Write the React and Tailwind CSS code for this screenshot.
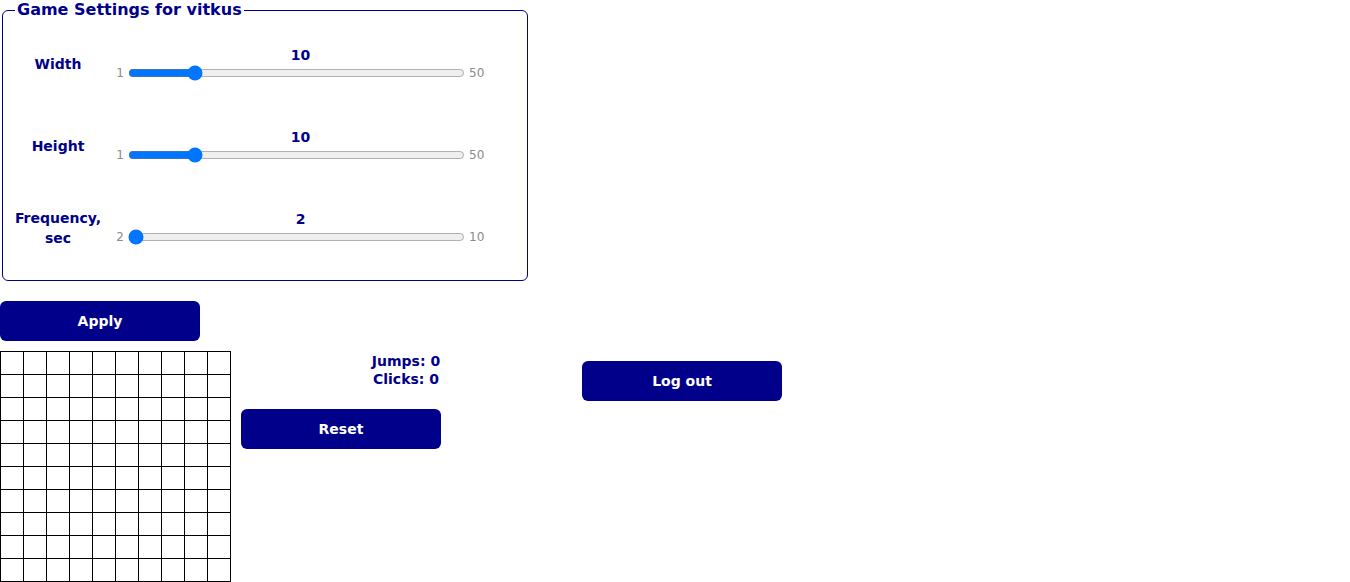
import { useState } from 'react';

const NAVY = 'text-[#00008b]';

function SliderRow({ label, min, max, value, onChange }) {
    const lines = label.split('\n');
    return (
        <div className="flex h-[82px] items-center">
            <div className={`w-[110px] text-center text-[14px] font-bold leading-[20px] ${NAVY}`}>
                {lines.map((l) => <div key={l}>{l}</div>)}
            </div>
            <div className="flex w-[372px] flex-col">
                <div className={`pl-[3px] text-center text-[14px] font-bold leading-[18px] ${NAVY}`}>{value}</div>
                <div className="flex h-[18px] items-center gap-[4px] text-[12px] text-[#8a8a8a]">
                    <span className="w-[11px] text-right">{min}</span>
                    <input
                        type="range"
                        min={min}
                        max={max}
                        value={value}
                        onChange={(e) => onChange(Number(e.target.value))}
                        className="h-4 w-[337px] accent-[#0075ff]"
                    />
                    <span>{max}</span>
                </div>
            </div>
        </div>
    );
}

export default function App() {
    const [width, setWidth] = useState(10);
    const [height, setHeight] = useState(10);
    const [freq, setFreq] = useState(2);

    return (
        <div className="bg-white" style={{ fontFamily: '"DejaVu Sans", Verdana, sans-serif' }}>
            <fieldset className="ml-[2px] w-[526px] rounded-md border border-[#00008b] pt-[3px] pb-[11px]">
                <legend className={`ml-[12px] px-[2px] text-[16px] font-bold leading-[20px] ${NAVY}`}>Game Settings for vitkus</legend>
                <SliderRow label="Width" min={1} max={50} value={width} onChange={setWidth} />
                <SliderRow label="Height" min={1} max={50} value={height} onChange={setHeight} />
                <SliderRow label={'Frequency,\nsec'} min={2} max={10} value={freq} onChange={setFreq} />
            </fieldset>

            <button className="mt-[20px] h-10 w-[200px] rounded-md bg-[#00008b] text-[14px] font-bold text-white">Apply</button>

            <div className="mt-[10px] flex items-start">
                <table className="border-collapse">
                    <tbody>
                        {Array.from({ length: 10 }).map((_, r) => (
                            <tr key={r}>
                                {Array.from({ length: 10 }).map((_, c) => (
                                    <td key={c} className="h-[23px] w-[23px] border border-black p-0" />
                                ))}
                            </tr>
                        ))}
                    </tbody>
                </table>
                <div className="ml-[10px] flex w-[200px] flex-col">
                    <div className={`ml-auto w-[70px] pt-[1px] text-center text-[14px] font-bold leading-[18px] ${NAVY}`}>
                        <div>Jumps: 0</div>
                        <div>Clicks: 0</div>
                    </div>
                    <button className="mt-[21px] h-10 w-[200px] rounded-md bg-[#00008b] text-[14px] font-bold text-white">Reset</button>
                </div>
                <button className="ml-[141px] mt-[10px] h-10 w-[200px] rounded-md bg-[#00008b] text-[14px] font-bold text-white">Log out</button>
            </div>
        </div>
    );
}
